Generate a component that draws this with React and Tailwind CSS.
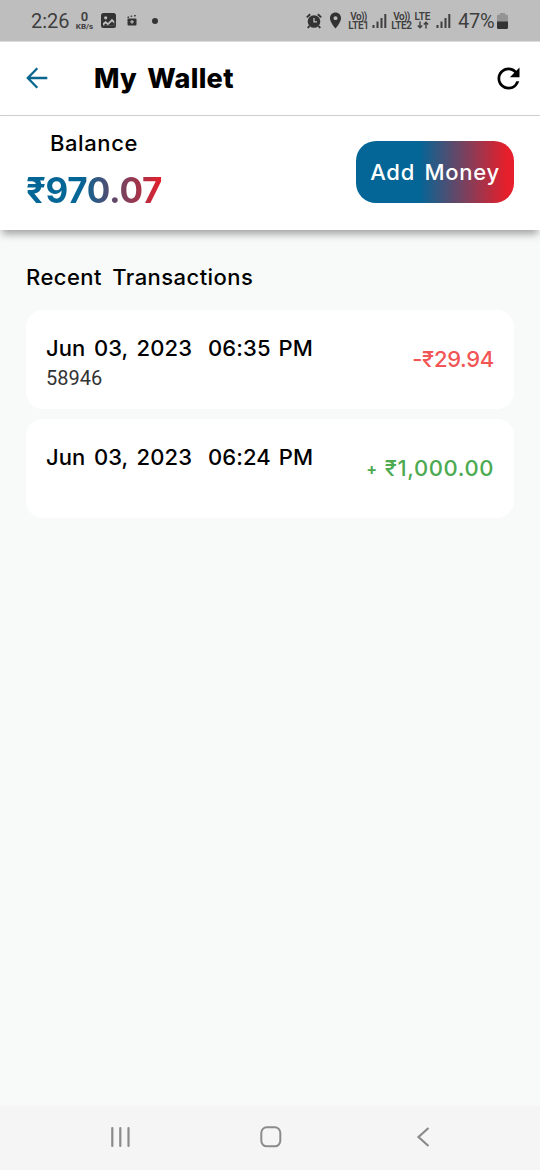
import { MdRefresh, MdLocationOn } from "react-icons/md";

const transactions = [
  { id: 1, date: "Jun 03, 2023", time: "06:35 PM", ref: "58946", sign: "-", amount: "₹29.94" },
  { id: 2, date: "Jun 03, 2023", time: "06:24 PM", ref: "", sign: "+", amount: "₹1,000.00" },
];

function SignalBars() {
  return (
    <svg width="15" height="16" viewBox="0 0 15 16" fill="#3f3f3f" className="shrink-0">
      <rect x="0.5" y="12" width="2" height="3" />
      <rect x="4.5" y="8.5" width="2" height="6.5" />
      <rect x="8.5" y="5" width="2" height="10" />
      <rect x="12.3" y="1" width="2" height="14" />
    </svg>
  );
}

function NetworkLabel({ top, bottom }) {
  return (
    <div className="flex w-[21px] shrink-0 flex-col items-center text-[10px] leading-[9px] font-semibold whitespace-nowrap">
      <span className="tracking-[-0.6px]">{top}</span>
      <span className="tracking-[-0.3px]">{bottom}</span>
    </div>
  );
}

function StatusBar() {
  return (
    <div className="flex h-[41px] items-center bg-[#bebebe] pl-[31px] text-[#3f3f3f] font-['Roboto',sans-serif]">
      <span className="w-[38px] text-[20px] leading-none whitespace-nowrap">2:26</span>
      <div className="ml-[6px] flex w-[19px] flex-col items-center gap-[1px] pt-px">
        <span className="text-[13px] leading-[10px] font-semibold">0</span>
        <span className="text-[8px] leading-[8px] font-bold whitespace-nowrap">KB/s</span>
      </div>
      <svg width="15" height="15" viewBox="0 0 15 15" className="ml-[7px] shrink-0">
        <rect width="15" height="15" rx="2.5" fill="#333" />
        <circle cx="4.7" cy="4.8" r="1.6" fill="#bebebe" />
        <path d="M2 12.8V10l2.7-2L7 10l4-4.2 2.3 2.4v4.6z" fill="#bebebe" />
        <path d="M2 12.8 4.7 10.5 7 12.3l4-3.8 2.3 2v2.3z" fill="#333" />
      </svg>
      <svg width="10" height="11" viewBox="0 0 10 11" className="ml-[11px] shrink-0">
        <path d="M.5 2.6 2 1.9M3.6 1.4l1.6-.3M7 .9l1.8-.3" stroke="#333" strokeWidth="1.3" />
        <rect x="0.5" y="3.6" width="9" height="7" rx="1" fill="#333" />
        <path d="M5 5v3.8M3.2 6.9h3.6" stroke="#bebebe" strokeWidth="1.1" />
      </svg>
      <span className="ml-[15px] size-[6px] rounded-full bg-[#333]" />

      <svg width="16" height="16" viewBox="0 0 16 16" className="ml-[148px] shrink-0">
        <circle cx="8" cy="8.5" r="6.3" fill="#333" />
        <path d="M.8 4.4 4.2 1.2M15.2 4.4l-3.4-3.2" stroke="#333" strokeWidth="1.9" />
        <path d="m3.4 13-1.6 2M12.6 13l1.6 2" stroke="#333" strokeWidth="2" />
        <path d="M8 5v3.8h3" stroke="#bebebe" strokeWidth="1.3" fill="none" />
      </svg>
      <MdLocationOn size={19} className="ml-[4px] shrink-0 text-[#333]" />
      <span className="ml-[3px]"><NetworkLabel top="Vo))" bottom="LTE1" /></span>
      <span className="ml-[3px]"><SignalBars /></span>
      <span className="ml-[4px]"><NetworkLabel top="Vo))" bottom="LTE2" /></span>
      <div className="ml-[2px] flex w-[17px] flex-col items-center">
        <span className="text-[10px] leading-[9px] font-semibold">LTE</span>
        <svg width="12" height="8" viewBox="0 0 12 8" stroke="#3f3f3f" strokeWidth="1.4" fill="none">
          <path d="M3 .5v6M.8 4.5 3 6.8l2.2-2.3M9 7.5v-6M6.8 3.5 9 1.2l2.2 2.3" />
        </svg>
      </div>
      <span className="ml-[5px]"><SignalBars /></span>
      <span className="ml-[7px] w-[36px] text-[20px] leading-none whitespace-nowrap tracking-[-0.3px]">47%</span>
      <svg width="11" height="16" viewBox="0 0 11 16" className="ml-[3px] shrink-0">
        <path d="M3 0h5v1.5h1.5a1.5 1.5 0 0 1 1.5 1.5v6H0V3a1.5 1.5 0 0 1 1.5-1.5H3z" fill="#949494" />
        <path d="M0 8.5h11v6a1.5 1.5 0 0 1-1.5 1.5h-8A1.5 1.5 0 0 1 0 14.5z" fill="#333" />
      </svg>
    </div>
  );
}

function Header() {
  return (
    <header className="flex h-[75px] items-center border-t border-b border-t-[#dcdcdc] border-b-[#cfcfcf] bg-white pr-[15px] pb-px pl-[26px]">
      <svg width="22" height="22" viewBox="0 0 22 22" fill="none" stroke="#08668f" strokeWidth="2.3">
        <path d="M21.3 11H2M11.3 1.3 1.8 11l9.5 9.7" />
      </svg>
      <h1 className="ml-[46px] text-[27px] leading-none font-extrabold tracking-[0.3px] whitespace-nowrap text-black [word-spacing:4px]">
        My Wallet
      </h1>
      <MdRefresh size={33} className="ml-auto text-black" />
    </header>
  );
}

function BalanceCard() {
  return (
    <section className="flex h-[114px] justify-between bg-white pr-[26px] pl-[26px] shadow-[0_6px_8px_-2px_rgba(0,0,0,0.36)]">
      <div className="flex w-[136px] flex-col items-center pt-[14px]">
        <span className="text-[22px] leading-[26px] font-medium tracking-[0.6px] whitespace-nowrap text-black">Balance</span>
        <span className="mt-[15px] bg-linear-to-r/srgb from-[#036697] from-40% to-[#e51f2b] bg-clip-text text-[35px] leading-[38px] font-bold tracking-[-0.3px] whitespace-nowrap text-transparent">
          ₹970.07
        </span>
      </div>
      <button className="mt-[25px] h-[62px] w-[158px] rounded-[20px] bg-linear-to-r/srgb from-[#036697] from-40% to-[#e51f2b] to-95% text-[22px] font-medium tracking-[0.7px] whitespace-nowrap text-white [word-spacing:3px]">
        Add Money
      </button>
    </section>
  );
}

function TransactionItem({ transaction }) {
  const isCredit = transaction.sign === "+";

  return (
    <li className="flex h-[99px] items-center justify-between rounded-[17px] bg-white px-[20px]">
      <div className="h-[52px]">
        <p className="flex text-[22px] leading-[28px] font-medium whitespace-nowrap text-black">
          <span className="w-[162px] tracking-[0.1px] [word-spacing:2.5px]">{transaction.date}</span>
          <span className="tracking-[0.1px] [word-spacing:2px]">{transaction.time}</span>
        </p>
        <p className="mt-[2px] text-[20px] leading-[28px] text-[#333] font-['Roboto',sans-serif]">{transaction.ref}</p>
      </div>
      {isCredit ? (
        <p className="flex items-center text-[22px] font-medium tracking-[0.6px] text-[#4caa50]">
          <span className="mr-[7px] text-[16px] font-bold">+</span>
          <span>{transaction.amount}</span>
        </p>
      ) : (
        <p className="text-[22px] font-medium tracking-[-0.3px] text-[#f25555]">
          {transaction.sign}
          {transaction.amount}
        </p>
      )}
    </li>
  );
}

function NavigationBar() {
  return (
    <nav className="flex h-[64px] items-center bg-[#f5f5f5] pb-[2px] pl-[110px]">
      <svg width="21" height="22" viewBox="0 0 21 22" stroke="#8b8b8b" strokeWidth="2.2" strokeLinecap="round">
        <path d="M2.3 2v18M10.3 2v18M18.5 2v18" />
      </svg>
      <svg width="22" height="22" viewBox="0 0 22 22" fill="none" stroke="#8b8b8b" strokeWidth="2" className="ml-[129px]">
        <rect x="1.3" y="1.3" width="19" height="19" rx="5.5" />
      </svg>
      <svg width="14" height="22" viewBox="0 0 14 22" fill="none" stroke="#8b8b8b" strokeWidth="2.2" className="ml-[134px]">
        <path d="M12.5 2 2.5 11l10 9" />
      </svg>
    </nav>
  );
}

export default function App() {
  return (
    <div className="flex h-[1170px] w-[540px] flex-col overflow-hidden bg-[#f8faf9] font-['Inter',sans-serif]">
      <StatusBar />
      <Header />
      <BalanceCard />
      <main className="flex-1 px-[26px] pt-[33px]">
        <h2 className="text-[22px] leading-[28px] font-medium tracking-[0.45px] whitespace-nowrap text-black [word-spacing:4px]">
          Recent Transactions
        </h2>
        <ul className="mt-[19px] flex flex-col gap-[10px]">
          {transactions.map((transaction) => (
            <TransactionItem key={transaction.id} transaction={transaction} />
          ))}
        </ul>
      </main>
      <NavigationBar />
    </div>
  );
}
